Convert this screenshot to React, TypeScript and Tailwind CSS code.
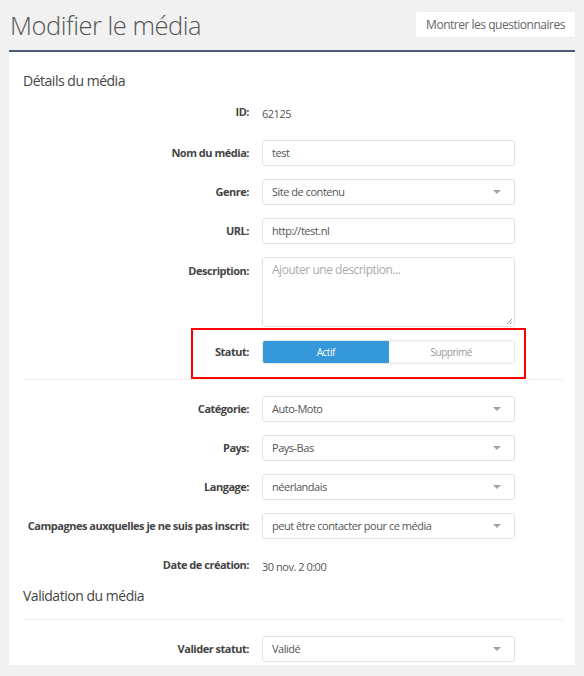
import React from "react";

const Caret = () => (
  <span className="ml-auto h-0 w-0 border-x-[4px] border-t-[4px] border-x-transparent border-t-[#a3a3a3]" />
);

const Row = ({ label, children, className = "" }: { label: string; children: React.ReactNode; className?: string }) => (
  <div className={`flex items-center ${className}`}>
    <div className="w-[239px] shrink-0 whitespace-nowrap pr-[13px] text-right text-[11px] font-bold text-[#444]">{label}</div>
    <div className="w-[253px]">{children}</div>
  </div>
);

const Input = ({ value }: { value: string }) => (
  <div className="flex h-[26px] items-center rounded-[3px] border border-[#e2e2e2] bg-white px-[9px] text-[11px] text-[#555]">
    {value}
  </div>
);

const Select = ({ value }: { value: string }) => (
  <div className="flex h-[26px] items-center rounded-[3px] border border-[#e2e2e2] bg-white pl-[9px] pr-[13px] text-[11px] text-[#555]">
    <span>{value}</span>
    <Caret />
  </div>
);

export default function App() {
  return (
    <div className="relative h-[676px] w-[584px] overflow-hidden bg-[#f1f1f1] font-['Open_Sans',sans-serif] tracking-[-0.03em]">
      <div className="flex items-start justify-between pl-[10px] pr-[9px] pt-[10px]">
        <h1 className="text-[25.5px] font-light leading-[30px] text-[#555]">Modifier le média</h1>
        <button className="mt-[2px] h-[25px] rounded-[2px] bg-white px-[10px] text-[12px] text-[#666]">Montrer les questionnaires</button>
      </div>

      <div className="mx-[9px] mt-[10px] h-[615px] border-t-2 border-[#4b5d6e] bg-white pl-[14px] pr-[12px]">
        <h2 className="pt-[20px] text-[14px] leading-[18px] text-[#444]">Détails du média</h2>

        <div className="mt-[15px] flex flex-col gap-[13px]">
          <Row label="ID:" className="mb-[8px] h-[14px]">
            <span className="text-[11px] text-[#555]">62125</span>
          </Row>
          <Row label="Nom du média:">
            <Input value="test" />
          </Row>
          <Row label="Genre:">
            <Select value="Site de contenu" />
          </Row>
          <Row label="URL:">
            <Input value="http://test.nl" />
          </Row>
          <div className="flex items-start">
            <div className="w-[239px] shrink-0 pr-[13px] pt-[6px] text-right text-[11px] font-bold text-[#444]">Description:</div>
            <div className="relative h-[70px] w-[253px] rounded-[3px] border border-[#e2e2e2] bg-white px-[9px] pt-[3px] text-[12px] text-[#aaa]">
              Ajouter une description...
              <svg className="absolute bottom-[1px] right-[1px]" width="7" height="7" viewBox="0 0 7 7">
                <path d="M6 1L1 6M6 4L4 6" stroke="#999" strokeWidth="1" />
              </svg>
            </div>
          </div>
          <Row label="Statut:">
            <div className="flex h-[24px] overflow-hidden rounded-[3px] border border-[#e6e6e6] text-[10px]">
              <div className="flex w-1/2 items-center justify-center bg-[#3498db] text-white">Actif</div>
              <div className="flex w-1/2 items-center justify-center bg-white text-[#999]">Supprimé</div>
            </div>
          </Row>
        </div>

        <div className="mt-[15px] border-t border-[#eee]" />

        <div className="mt-[16px] flex flex-col gap-[13px]">
          <Row label="Catégorie:">
            <Select value="Auto-Moto" />
          </Row>
          <Row label="Pays:">
            <Select value="Pays-Bas" />
          </Row>
          <Row label="Langage:">
            <Select value="néerlandais" />
          </Row>
          <Row label="Campagnes auxquelles je ne suis pas inscrit:">
            <Select value="peut être contacter pour ce média" />
          </Row>
          <Row label="Date de création:" className="mt-[6px] h-[14px]">
            <span className="text-[11px] text-[#555]">30 nov. 2 0:00</span>
          </Row>
        </div>

        <h2 className="mt-[15px] text-[14px] leading-[18px] text-[#444]">Validation du média</h2>
        <div className="mt-[14px] border-t border-[#eee]" />

        <div className="mt-[16px]">
          <Row label="Valider statut:">
            <Select value="Validé" />
          </Row>
        </div>
      </div>

      <div className="absolute left-[191px] top-[328px] h-[51px] w-[335px] border-2 border-[#ff0000]" />
    </div>
  );
}
